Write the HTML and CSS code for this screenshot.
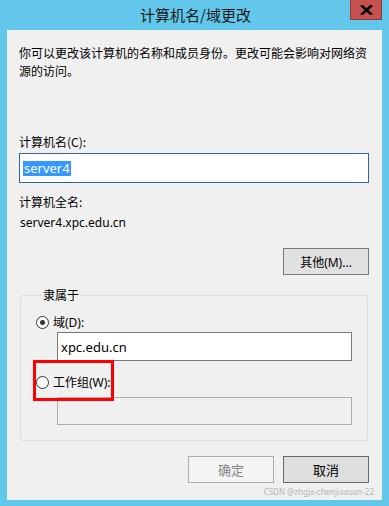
FILE: index.html
```html
<!DOCTYPE html>
<html lang="zh-CN">
<head>
<meta charset="utf-8">
<title>计算机名/域更改</title>
<link rel="stylesheet" href="styles.css">
</head>
<body>
<div class="window">
  <div class="titlebar">
    <span class="title">计算机名/域更改</span>
    <button class="close" aria-label="关闭">
      <svg width="13" height="10" viewBox="0 0 13 10"><path d="M2 1 L11 9 M11 1 L2 9" stroke="#000" stroke-width="2.6" stroke-linecap="square"/></svg>
    </button>
  </div>
  <div class="client">
    <p class="desc">你可以更改该计算机的名称和成员身份。更改可能会影响对网络资源的访问。</p>
    <div class="label l-name">计算机名(C):</div>
    <div class="input focused"><span class="sel">server4</span></div>
    <div class="label l-full">计算机全名:</div>
    <div class="value">server4.xpc.edu.cn</div>
    <div class="row-right r-more"><button class="btn">其他(M)...</button></div>
    <fieldset class="group">
      <legend>隶属于</legend>
      <div class="radio-row"><span class="radio checked"></span><span>域(D):</span></div>
      <div class="input sub">xpc.edu.cn</div>
      <div class="radio-row r2"><span class="radio"></span><span>工作组(W):</span></div>
      <div class="input sub disabled"></div>
      <div class="mark"></div>
    </fieldset>
    <div class="row-right r-actions">
      <button class="btn disabled">确定</button>
      <button class="btn default">取消</button>
    </div>
    <div class="watermark">CSDN @zhgjx-chenjiaxuan-22</div>
  </div>
</div>
</body>
</html>
```
FILE: styles.css
```css
html, body {
  margin: 0;
  padding: 0;
}
body {
  width: 389px;
  height: 506px;
  background: #62c7ea;
  font-family: "Noto Sans", "Noto Sans CJK SC", sans-serif;
  font-size: 12px;
  color: #000;
  overflow: hidden;
}
.window {
  width: 389px;
}
.titlebar {
  position: relative;
  height: 30px;
  display: flex;
  align-items: center;
  justify-content: center;
}
.title {
  font-family: "Noto Sans CJK SC", sans-serif;
  font-size: 15px;
  color: #1a1a1a;
  line-height: 30px;
  margin-left: 2px;
}
.close {
  position: absolute;
  left: 350px;
  top: 0;
  width: 32px;
  height: 20px;
  margin: 0;
  padding: 0;
  background: #c75050;
  border: 1px solid #8c3a3a;
  border-top: none;
  display: flex;
  align-items: center;
  justify-content: center;
}
.client {
  margin: 0 7px;
  width: 375px;
  height: 470px;
  background: #f0f0f0;
  box-sizing: border-box;
  padding: 14px 13px 0 12px;
  display: flex;
  flex-direction: column;
}
.desc {
  margin: 0;
  line-height: 18px;
  font-family: "Noto Sans CJK SC", sans-serif;
  width: 352px;
}
.label {
  line-height: 18px;
  font-family: "Noto Sans CJK SC", sans-serif;
}
.l-name { margin-top: 53px; }
.l-full { margin-top: 10px; }
.value {
  margin-top: 3px;
  line-height: 18px;
  padding-left: 1px;
}
.input {
  box-sizing: border-box;
  height: 30px;
  width: 350px;
  margin-top: 2px;
  background: #fff;
  border: 1px solid #7a7a7a;
  padding: 3px 3px;
  line-height: 22px;
  font-size: 13px;
}
.input.focused {
  border-color: #336699;
}
.sel {
  display: inline-block;
  background: #3399ff;
  color: #fff;
  line-height: 15px;
  padding: 0 1px;
  margin-top: 1px;
}
.row-right {
  display: flex;
  justify-content: flex-end;
  gap: 9px;
}
.r-more { margin-top: 16px; }
.btn {
  box-sizing: border-box;
  width: 86px;
  height: 27px;
  margin: 0;
  padding: 0;
  background: #e1e1e1;
  border: 1px solid #7a7a7a;
  font-family: "Noto Sans", "Noto Sans CJK SC", sans-serif;
  font-size: 12px;
  color: #000;
}
.btn.default {
  border-color: #6a6a6a;
  background: #dedede;
  font-size: 13px;
}
.btn.disabled {
  background: #f4f4f4;
  border-color: #adadad;
  color: #838383;
  font-size: 13px;
}
.group {
  position: relative;
  margin: 11px 1px 0 1px;
  padding: 0 0 15px 15px;
  border: 1px solid #dcdcdc;
  border-radius: 3px;
  min-width: 0;
}
.group legend {
  margin-left: 6px;
  padding: 0 1px;
  line-height: 18px;
  font-family: "Noto Sans CJK SC", sans-serif;
  font-size: 12px;
}
.radio-row {
  display: flex;
  align-items: center;
  gap: 4px;
  height: 18px;
  margin-top: 9px;
  font-family: "Noto Sans", "Noto Sans CJK SC", sans-serif;
}
.radio-row.r2 { margin-top: 12px; }
.radio {
  box-sizing: border-box;
  width: 13px;
  height: 13px;
  border-radius: 50%;
  border: 1px solid #333;
  background: #fff;
  display: flex;
  align-items: center;
  justify-content: center;
}
.radio.checked::after {
  content: "";
  width: 5px;
  height: 5px;
  border-radius: 50%;
  background: #333;
}
.input.sub {
  width: 295px;
  height: 29px;
  margin-left: 21px;
  margin-top: 1px;
  padding: 3px 3px;
}
.input.sub.disabled {
  height: 28px;
  margin-top: 6px;
  background: #f0f0f0;
  border-color: #adadad;
}
.mark {
  position: absolute;
  left: 12px;
  top: 56px;
  width: 81px;
  height: 41px;
  box-sizing: border-box;
  border: 3px solid #ff0000;
}
.r-actions { margin-top: 15px; }
.watermark {
  margin-top: 4px;
  text-align: right;
  font-size: 8px;
  line-height: 10px;
  color: #b4b4b4;
  margin-right: -5px;
}
```
